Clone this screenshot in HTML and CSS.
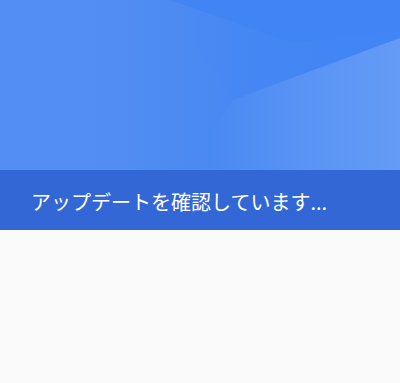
FILE: index.html
```html
<!DOCTYPE html>
<html lang="ja">
<head>
    <meta charset="UTF-8">
    <title>アップデート</title>
    <link rel="stylesheet" href="styles.css">
</head>
<body>
<div class="page">
    <div class="hero">
        <svg width="400" height="170" viewBox="0 0 400 170">
            <defs>
                <linearGradient id="base" gradientUnits="userSpaceOnUse" x1="0" y1="0" x2="400" y2="0">
                    <stop offset="0" stop-color="#528ef3"/>
                    <stop offset="0.3" stop-color="#518df2"/>
                    <stop offset="0.6" stop-color="#4788f2"/>
                    <stop offset="1" stop-color="#4788f2"/>
                </linearGradient>
                <linearGradient id="light" gradientUnits="userSpaceOnUse" x1="210" y1="0" x2="400" y2="0">
                    <stop offset="0" stop-color="#639bf6" stop-opacity="0"/>
                    <stop offset="0.6" stop-color="#5e97f5" stop-opacity="0.9"/>
                    <stop offset="1" stop-color="#639bf6"/>
                </linearGradient>
                <linearGradient id="dark" gradientUnits="userSpaceOnUse" x1="190" y1="0" x2="330" y2="0">
                    <stop offset="0" stop-color="#4285f4" stop-opacity="0"/>
                    <stop offset="1" stop-color="#4285f4"/>
                </linearGradient>
            </defs>
            <rect width="400" height="170" fill="url(#base)"/>
            <polygon points="170,0 400,0 400,38 233,100 190,40" fill="url(#dark)"/>
            <polygon points="170,0 400,0 400,30 293,43" fill="#4185f4"/>
            <polygon points="233,100 400,38 400,170 190,170" fill="url(#light)"/>
        </svg>
    </div>
    <div class="banner">
        <span class="status">アップデートを確認しています...</span>
    </div>
</div>
</body>
</html>
```

FILE: styles.css
```css
* {
    padding: 0;
    margin: 0;
}

body {
    background: #fafafa;
    font-family: "Noto Sans CJK JP", "Noto Sans", sans-serif;
}

.page {
    width: 400px;
}

.hero {
    height: 170px;
    overflow: hidden;
}

.hero svg {
    display: block;
}

.banner {
    height: 60px;
    background: #3367d6;
    box-shadow: 0 1px 2px rgba(0, 0, 0, 0.35);
    display: flex;
    align-items: center;
    padding: 4px 0 0 31px;
    box-sizing: border-box;
}

.status {
    color: #fff;
    font-size: 20px;
    line-height: 24px;
}
```
